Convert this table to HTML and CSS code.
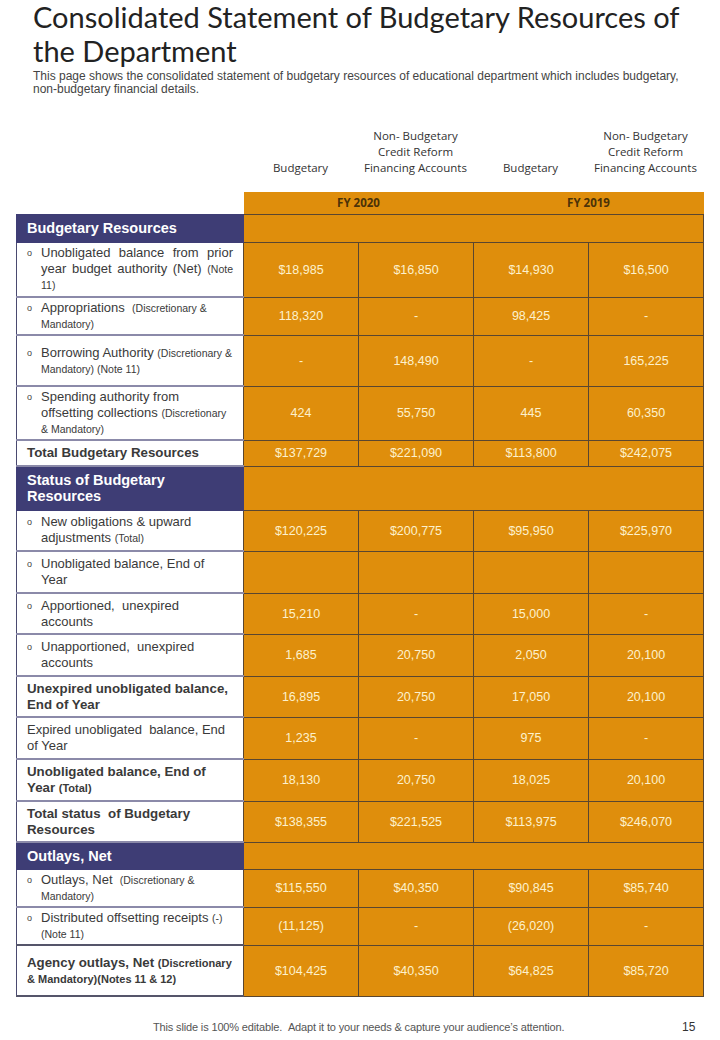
FILE: index.html
```html
<!DOCTYPE html>
<html>
<head>
<meta charset="utf-8">
<link rel="stylesheet" href="styles.css">
</head>
<body>
<div class="page">
  <header class="head">
    <h1 class="title">Consolidated Statement of Budgetary Resources of the Department</h1>
    <p class="subtitle">This page shows the consolidated statement of budgetary resources of educational department which includes budgetary, non-budgetary financial details.</p>
  </header>

  <div class="colheads">
    <div></div>
    <div class="ch">Budgetary</div>
    <div class="ch">Non- Budgetary<br>Credit Reform<br>Financing Accounts</div>
    <div class="ch">Budgetary</div>
    <div class="ch">Non- Budgetary<br>Credit Reform<br>Financing Accounts</div>
  </div>

  <table class="stmt">
    <colgroup>
      <col class="c-label"><col class="c-val"><col class="c-val"><col class="c-val"><col class="c-val">
    </colgroup>
    <thead>
      <tr class="fy">
        <th class="blank"></th>
        <th colspan="2" class="fycell">FY 2020</th>
        <th colspan="2" class="fycell">FY 2019</th>
      </tr>
    </thead>
    <tbody>
      <tr class="h28">
        <td class="sec">Budgetary Resources</td><td colspan="4" class="secfill"></td>
      </tr>
      <tr class="h55">
        <td class="lbl"><div class="item"><span class="b">o</span><span class="t jt">Unobligated balance from prior year budget authority (Net) <small>(Note 11)</small></span></div></td>
        <td class="v">$18,985</td><td class="v">$16,850</td><td class="v">$14,930</td><td class="v">$16,500</td>
      </tr>
      <tr class="h38">
        <td class="lbl"><div class="item"><span class="b">o</span><span class="t">Appropriations &nbsp;<small>(Discretionary &amp; Mandatory)</small></span></div></td>
        <td class="v">118,320</td><td class="v">-</td><td class="v">98,425</td><td class="v">-</td>
      </tr>
      <tr class="h51">
        <td class="lbl"><div class="item"><span class="b">o</span><span class="t">Borrowing Authority <small>(Discretionary &amp; Mandatory) (Note 11)</small></span></div></td>
        <td class="v">-</td><td class="v">148,490</td><td class="v">-</td><td class="v">165,225</td>
      </tr>
      <tr class="h54">
        <td class="lbl"><div class="item"><span class="b">o</span><span class="t">Spending authority from offsetting collections <small>(Discretionary &amp; Mandatory)</small></span></div></td>
        <td class="v">424</td><td class="v">55,750</td><td class="v">445</td><td class="v">60,350</td>
      </tr>
      <tr class="h26">
        <td class="lbl bold">Total Budgetary Resources</td>
        <td class="v">$137,729</td><td class="v">$221,090</td><td class="v">$113,800</td><td class="v">$242,075</td>
      </tr>
      <tr class="h44">
        <td class="sec">Status of Budgetary Resources</td><td colspan="4" class="secfill"></td>
      </tr>
      <tr class="h41">
        <td class="lbl"><div class="item"><span class="b">o</span><span class="t">New obligations &amp; upward adjustments <small>(Total)</small></span></div></td>
        <td class="v">$120,225</td><td class="v">$200,775</td><td class="v">$95,950</td><td class="v">$225,970</td>
      </tr>
      <tr class="h42">
        <td class="lbl"><div class="item"><span class="b">o</span><span class="t">Unobligated balance, End of Year</span></div></td>
        <td class="v"></td><td class="v"></td><td class="v"></td><td class="v"></td>
      </tr>
      <tr class="h41">
        <td class="lbl"><div class="item"><span class="b">o</span><span class="t">Apportioned, &nbsp;unexpired<br>accounts</span></div></td>
        <td class="v">15,210</td><td class="v">-</td><td class="v">15,000</td><td class="v">-</td>
      </tr>
      <tr class="h42">
        <td class="lbl"><div class="item"><span class="b">o</span><span class="t">Unapportioned, &nbsp;unexpired accounts</span></div></td>
        <td class="v">1,685</td><td class="v">20,750</td><td class="v">2,050</td><td class="v">20,100</td>
      </tr>
      <tr class="h41">
        <td class="lbl bold">Unexpired unobligated balance, End of Year</td>
        <td class="v">16,895</td><td class="v">20,750</td><td class="v">17,050</td><td class="v">20,100</td>
      </tr>
      <tr class="h42">
        <td class="lbl plain">Expired unobligated &nbsp;balance, End of Year</td>
        <td class="v">1,235</td><td class="v">-</td><td class="v">975</td><td class="v">-</td>
      </tr>
      <tr class="h42">
        <td class="lbl bold">Unobligated balance, End of Year <span class="sm">(Total)</span></td>
        <td class="v">18,130</td><td class="v">20,750</td><td class="v">18,025</td><td class="v">20,100</td>
      </tr>
      <tr class="h41">
        <td class="lbl bold">Total status &nbsp;of Budgetary Resources</td>
        <td class="v">$138,355</td><td class="v">$221,525</td><td class="v">$113,975</td><td class="v">$246,070</td>
      </tr>
      <tr class="h27">
        <td class="sec">Outlays, Net</td><td colspan="4" class="secfill"></td>
      </tr>
      <tr class="h38">
        <td class="lbl"><div class="item"><span class="b">o</span><span class="t">Outlays, Net &nbsp;<small>(Discretionary &amp; Mandatory)</small></span></div></td>
        <td class="v">$115,550</td><td class="v">$40,350</td><td class="v">$90,845</td><td class="v">$85,740</td>
      </tr>
      <tr class="h38">
        <td class="lbl dark"><div class="item"><span class="b">o</span><span class="t">Distributed offsetting receipts <small>(-) (Note 11)</small></span></div></td>
        <td class="v">(11,125)</td><td class="v">-</td><td class="v">(26,020)</td><td class="v">-</td>
      </tr>
      <tr class="h51 last">
        <td class="lbl bold">Agency outlays, Net <span class="sm">(Discretionary &amp; Mandatory)(Notes 11 &amp; 12)</span></td>
        <td class="v">$104,425</td><td class="v">$40,350</td><td class="v">$64,825</td><td class="v">$85,720</td>
      </tr>
    </tbody>
  </table>

  <footer class="foot">
    <span class="note">This slide is 100% editable. &nbsp;Adapt it to your needs &amp; capture your audience’s attention.</span>
    <span class="pnum">15</span>
  </footer>
</div>
</body>
</html>
```

FILE: styles.css
```css
html, body {
  margin: 0;
  padding: 0;
  background: #ffffff;
}

.page {
  width: 720px;
  height: 1040px;
  position: relative;
  font-family: "Liberation Sans", Arial, sans-serif;
  color: #333;
}

.head {
  padding: 0 20px 0 33px;
}

.title {
  margin: 0;
  font-family: "Lato", "Open Sans", sans-serif;
  font-weight: 400;
  font-size: 29px;
  line-height: 34px;
  color: #222;
  width: 667px;
  letter-spacing: 0;
}

.subtitle {
  margin: 2px 0 0 0;
  font-size: 12px;
  line-height: 13px;
  color: #444;
  letter-spacing: 0;
  width: 655px;
}

.colheads {
  display: grid;
  grid-template-columns: 227px repeat(4, 115px);
  margin: 32px 0 0 16px;
  height: 48px;
  align-items: end;
}

.ch {
  text-align: center;
  font-family: "Open Sans", "Noto Sans", sans-serif;
  font-size: 11.5px;
  line-height: 16px;
  color: #333;
}

.stmt {
  margin: 16px 0 0 16px;
  border-collapse: collapse;
  table-layout: fixed;
  width: 687px;
}

.c-label { width: 227px; }
.c-val { width: 115px; }

.stmt th,
.stmt td {
  box-sizing: border-box;
  padding: 0;
}

.fy th {
  height: 22px;
}

.fy .blank {
  background: transparent;
}

.fycell {
  background: #df8e0c;
  color: #4b3208;
  font-family: "Open Sans", "Noto Sans", sans-serif;
  font-weight: 700;
  font-size: 11.5px;
  text-align: center;
}

.stmt td {
  vertical-align: middle;
}

.h26 td { height: 26px; }
.h27 td { height: 27px; }
.h28 td { height: 28px; }
.h38 td { height: 38px; }
.h41 td { height: 41px; }
.h42 td { height: 42px; }
.h44 td { height: 44px; }
.h51 td { height: 51px; }
.h54 td { height: 54px; }
.h55 td { height: 55px; }

.stmt td.sec {
  background: #3e3d75;
  color: #fff;
  font-weight: 700;
  font-size: 14.5px;
  line-height: 16px;
  padding: 0 10px;
  border-left: 1px solid #3e3d75;
  border-bottom: 1px solid #3e3d75;
}

.secfill {
  background: #df8e0c;
  border-top: 1px solid #5a4630;
  border-bottom: 1px solid #5a4630;
  border-right: 1px solid #5a4630;
}

.stmt td.lbl {
  background: #fff;
  border-left: 1px solid #4a4a70;
  border-bottom: 2px solid #8b8aa9;
  padding: 0 10px 0 10px;
  font-size: 13px;
  line-height: 16px;
  color: #3a3a3a;
}

.stmt td.lbl.dark,
.stmt tr.last td.lbl {
  border-bottom: 2px solid #55556a;
}

.item {
  display: flex;
  align-items: flex-start;
}

.b {
  flex: 0 0 14px;
  font-size: 9px;
  line-height: 16px;
  color: #444;
}

.t {
  flex: 1;
}

.jt {
  text-align: justify;
}

.lbl small {
  font-size: 10.5px;
}

.stmt td.lbl.bold {
  font-weight: 700;
  font-size: 13.3px;
}

.sm {
  font-size: 11px;
}

.v {
  background: #df8e0c;
  color: #fdf1cc;
  text-align: center;
  font-size: 12.5px;
  border: 1px solid #5a4630;
}

.foot {
  position: absolute;
  left: 0;
  top: 1020px;
  width: 720px;
  font-size: 11px;
  color: #555;
}

.note {
  position: absolute;
  left: 153px;
  top: 1px;
  letter-spacing: -0.15px;
}

.pnum {
  position: absolute;
  left: 682px;
  top: 0;
  font-size: 12px;
  color: #333;
}
```
